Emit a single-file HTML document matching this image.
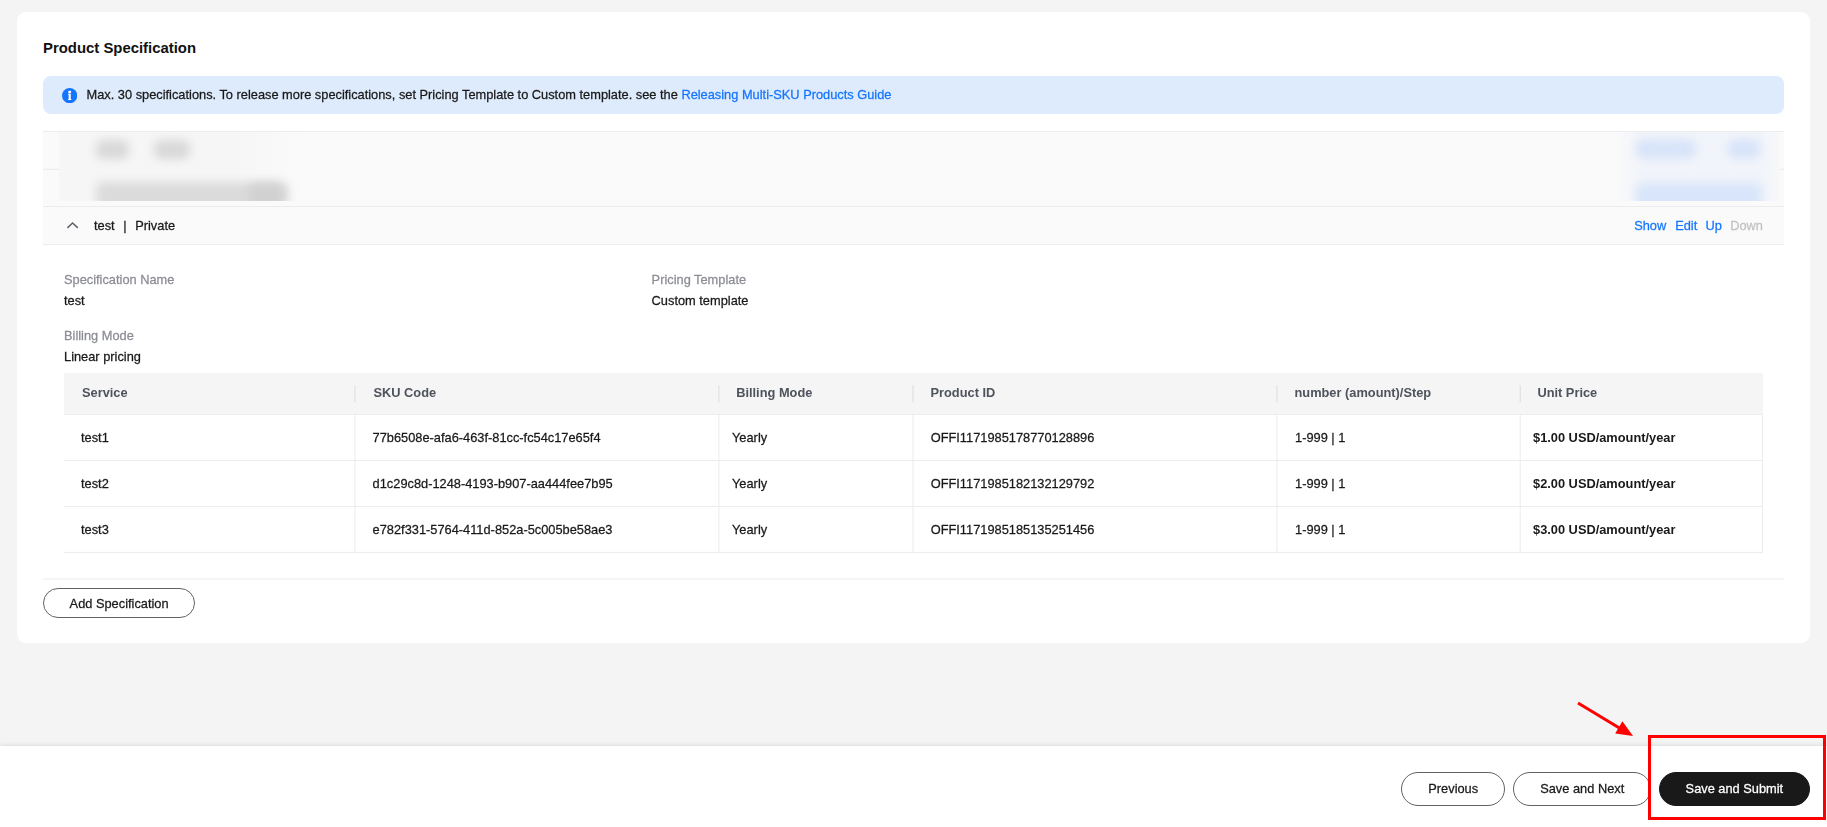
<!DOCTYPE html>
<html lang="en">
<head>
<meta charset="utf-8">
<title>Product Specification</title>
<style>
*{box-sizing:border-box;margin:0;padding:0}
html,body{width:1827px;height:827px;overflow:hidden;background:#f4f4f4}
body{font-family:"Liberation Sans",Arial,sans-serif;font-size:12.82px;color:#191919;position:relative}
.abs{position:absolute;white-space:nowrap;line-height:20px}
.t{transform:scaleY(1.045);transform-origin:0 14px;-webkit-text-stroke:0.25px}
.card{position:absolute;left:17px;top:12px;width:1793px;height:631px;background:#fff;border-radius:9px}
.title{position:absolute;left:43px;top:38px;line-height:20px;font-size:14.9px;font-weight:bold;color:#111;white-space:nowrap}
.info{position:absolute;left:43px;top:76px;width:1741px;height:38px;background:#deebfc;border-radius:8px}
.ico{position:absolute;left:61.9px;top:87.6px;width:15.3px;height:15.3px}
.rows{position:absolute;left:43px;top:131px;width:1741px;height:113.5px;background:#fafafa}
.lnk{color:#1476ff}
.dis{color:#c2c2c2}
.lbl{color:#8b8d95}
.th{font-weight:bold;color:#4f535d;-webkit-text-stroke:0}
.b{font-weight:bold;-webkit-text-stroke:0}
.w{color:#fff}
.patch{position:absolute;overflow:hidden}
.patch i{position:absolute;display:block;border-radius:7px;filter:blur(5px)}
.thead{position:absolute;left:64px;top:373px;width:1699px;height:41px;background:#f5f5f5}
.btn{position:absolute;height:34px;border:1px solid #626262;border-radius:17px;background:#fff}
.footer{position:absolute;left:0;top:746px;width:1827px;height:81px;background:#fff;box-shadow:0 -1px 4px rgba(0,0,0,.10)}
svg.ov{position:absolute;left:0;top:0;pointer-events:none}
</style>
</head>
<body>

<div class="card"></div>
<div class="title">Product Specification</div>
<div class="info"></div>
<svg class="ico" viewBox="0 0 16 16"><circle cx="8" cy="8" r="8" fill="#1476ff"/><g transform="translate(0.05 -0.5)" fill="#fff"><rect x="6.45" y="3.5" width="3.1" height="2.45" rx="0.9"/><path d="M6.3 6.45h2.8v5.5h0.6v1.1h-3.4v-1.1h0.6v-4.5h-0.6z"/></g></svg>
<div class="abs t" style="left:86.5px;top:85px;">Max. 30 specifications. To release more specifications, set Pricing Template to Custom template. see the <span class="lnk">Releasing Multi-SKU Products Guide</span></div>
<div class="rows"></div>
<svg class="ov" width="1827" height="827" viewBox="0 0 1827 827">
<rect x="43" y="131.0" width="1741" height="1" fill="#ececec"/>
<rect x="43" y="168.9" width="1741" height="1" fill="#ececec"/>
<rect x="43" y="206.0" width="1741" height="1" fill="#ececec"/>
<rect x="43" y="244.0" width="1741" height="1" fill="#ececec"/>
</svg>
<div style="position:absolute;left:59px;top:166px;width:1720px;height:6px;background:#fafafa"></div>
<div class="patch" style="left:59px;top:131.5px;width:243px;height:69px;background:linear-gradient(90deg,#f6f6f6 0,#f6f6f6 72%,#fafafa 100%)">
  <i style="left:37px;top:8px;width:33px;height:19px;background:#d8d8d8"></i>
  <i style="left:95px;top:8px;width:36px;height:19px;background:#d8d8d8"></i>
  <i style="left:37px;top:50px;width:192px;height:26px;background:#dbdbdb"></i>
  <i style="left:190px;top:52px;width:34px;height:22px;background:#d1d1d1"></i>
</div>
<div class="patch" style="left:1614px;top:131.5px;width:165px;height:69px;background:linear-gradient(90deg,#fafafa 0,#f1f4fa 18%,#f1f4fa 88%,#f7f8fa 100%)">
  <i style="left:22px;top:8px;width:60px;height:18px;background:#d6e3f9"></i>
  <i style="left:114px;top:8px;width:32px;height:18px;background:#d6e3f9"></i>
  <i style="left:22px;top:51px;width:126px;height:28px;background:#d8e5fa"></i>
</div>
<svg class="ov" width="1827" height="827" viewBox="0 0 1827 827"><path d="M67.4 227.9 L72.6 223 L77.8 227.9" fill="none" stroke="#5f6269" stroke-width="1.5"/></svg>
<div class="abs t" style="left:94px;top:216px;">test</div>
<div class="abs t" style="left:123.2px;top:216px;">|</div>
<div class="abs t" style="left:135.2px;top:216px;">Private</div>
<div class="abs t lnk" style="left:1634.2px;top:216px;">Show</div>
<div class="abs t lnk" style="left:1675.2px;top:216px;">Edit</div>
<div class="abs t lnk" style="left:1705.6px;top:216px;">Up</div>
<div class="abs t dis" style="left:1730.2px;top:216px;">Down</div>
<div class="abs t lbl" style="left:64px;top:270px;">Specification Name</div>
<div class="abs t" style="left:64px;top:291px;">test</div>
<div class="abs t lbl" style="left:651.6px;top:270px;">Pricing Template</div>
<div class="abs t" style="left:651.6px;top:291px;">Custom template</div>
<div class="abs t lbl" style="left:64px;top:326px;">Billing Mode</div>
<div class="abs t" style="left:64px;top:347px;">Linear pricing</div>
<div class="thead"></div>
<div class="abs t th" style="left:82px;top:383px;">Service</div>
<div class="abs t th" style="left:373.5px;top:383px;">SKU Code</div>
<div class="abs t th" style="left:736.2px;top:383px;">Billing Mode</div>
<div class="abs t th" style="left:930.5px;top:383px;">Product ID</div>
<div class="abs t th" style="left:1294.5px;top:383px;">number (amount)/Step</div>
<div class="abs t th" style="left:1537.4px;top:383px;">Unit Price</div>
<div class="abs t" style="left:81px;top:428px;">test1</div>
<div class="abs t" style="left:372.6px;top:428px;">77b6508e-afa6-463f-81cc-fc54c17e65f4</div>
<div class="abs t" style="left:732px;top:428px;">Yearly</div>
<div class="abs t" style="left:930.7px;top:428px;">OFFI1171985178770128896</div>
<div class="abs t" style="left:1295px;top:428px;">1-999 | 1</div>
<div class="abs t b" style="left:1533px;top:428px;">$1.00 USD/amount/year</div>
<div class="abs t" style="left:81px;top:474px;">test2</div>
<div class="abs t" style="left:372.6px;top:474px;">d1c29c8d-1248-4193-b907-aa444fee7b95</div>
<div class="abs t" style="left:732px;top:474px;">Yearly</div>
<div class="abs t" style="left:930.7px;top:474px;">OFFI1171985182132129792</div>
<div class="abs t" style="left:1295px;top:474px;">1-999 | 1</div>
<div class="abs t b" style="left:1533px;top:474px;">$2.00 USD/amount/year</div>
<div class="abs t" style="left:81px;top:520px;">test3</div>
<div class="abs t" style="left:372.6px;top:520px;">e782f331-5764-411d-852a-5c005be58ae3</div>
<div class="abs t" style="left:732px;top:520px;">Yearly</div>
<div class="abs t" style="left:930.7px;top:520px;">OFFI1171985185135251456</div>
<div class="abs t" style="left:1295px;top:520px;">1-999 | 1</div>
<div class="abs t b" style="left:1533px;top:520px;">$3.00 USD/amount/year</div>
<div class="btn" style="left:43px;top:588px;width:152.4px;height:30px;border-radius:15px"></div>
<div class="abs t" style="left:69.6px;top:594px;">Add Specification</div>
<div class="footer"></div>
<div class="btn" style="left:1401px;top:772px;width:103.6px"></div>
<div class="btn" style="left:1513px;top:772px;width:137.6px"></div>
<div class="btn" style="left:1659px;top:772px;width:151px;background:#191919;border-color:#191919"></div>
<div class="abs t" style="left:1428.3px;top:779px;">Previous</div>
<div class="abs t" style="left:1540.2px;top:779px;">Save and Next</div>
<div class="abs t w" style="left:1685.6px;top:779px;">Save and Submit</div>
<svg class="ov" width="1827" height="827" viewBox="0 0 1827 827">
<rect x="354.4" y="385.3" width="1" height="17" fill="#dcdcdc"/>
<rect x="354.4" y="414.5" width="1" height="138.4" fill="#ececec"/>
<rect x="718.4" y="385.3" width="1" height="17" fill="#dcdcdc"/>
<rect x="718.4" y="414.5" width="1" height="138.4" fill="#ececec"/>
<rect x="912.5" y="385.3" width="1" height="17" fill="#dcdcdc"/>
<rect x="912.5" y="414.5" width="1" height="138.4" fill="#ececec"/>
<rect x="1276.4" y="385.3" width="1" height="17" fill="#dcdcdc"/>
<rect x="1276.4" y="414.5" width="1" height="138.4" fill="#ececec"/>
<rect x="1519.7" y="385.3" width="1" height="17" fill="#dcdcdc"/>
<rect x="1519.7" y="414.5" width="1" height="138.4" fill="#ececec"/>
<rect x="1762" y="414.5" width="1" height="138.4" fill="#ececec"/>
<rect x="64" y="414" width="1699" height="1" fill="#ededed"/>
<rect x="64" y="460.0" width="1699" height="1" fill="#ececec"/>
<rect x="64" y="506.0" width="1699" height="1" fill="#ececec"/>
<rect x="64" y="551.9" width="1699" height="1" fill="#ececec"/>
<rect x="43" y="578.5" width="1741" height="1" fill="#ececec"/>
</svg>
<svg class="ov" width="1827" height="827" viewBox="0 0 1827 827">
  <rect x="1649.5" y="736.5" width="175" height="82" fill="none" stroke="#ff0000" stroke-width="3"/>
  <line x1="1578" y1="703" x2="1621" y2="729" stroke="#ff0000" stroke-width="3"/>
  <polygon points="1633,736 1622.4,721.3 1615.2,733.5" fill="#ff0000"/>
</svg>
</body>
</html>
